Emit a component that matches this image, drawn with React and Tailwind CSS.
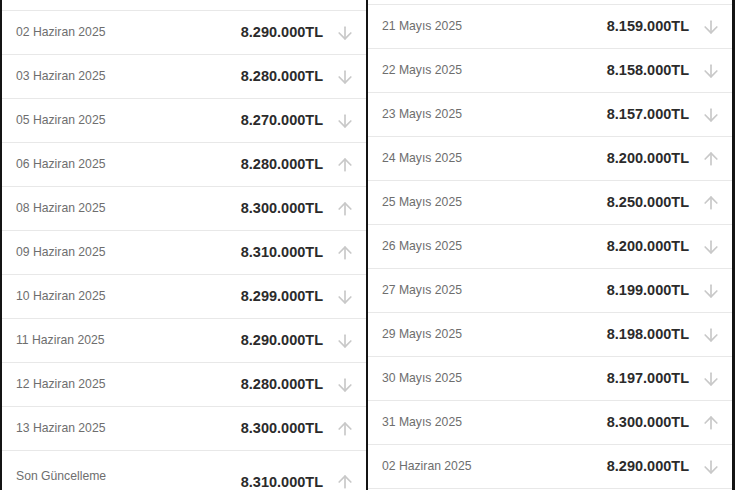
import { ArrowDown, ArrowUp } from 'lucide-react';

const leftRows = [
  { date: '02 Haziran 2025', price: '8.290.000TL', dir: 'down' },
  { date: '03 Haziran 2025', price: '8.280.000TL', dir: 'down' },
  { date: '05 Haziran 2025', price: '8.270.000TL', dir: 'down' },
  { date: '06 Haziran 2025', price: '8.280.000TL', dir: 'up' },
  { date: '08 Haziran 2025', price: '8.300.000TL', dir: 'up' },
  { date: '09 Haziran 2025', price: '8.310.000TL', dir: 'up' },
  { date: '10 Haziran 2025', price: '8.299.000TL', dir: 'down' },
  { date: '11 Haziran 2025', price: '8.290.000TL', dir: 'down' },
  { date: '12 Haziran 2025', price: '8.280.000TL', dir: 'down' },
  { date: '13 Haziran 2025', price: '8.300.000TL', dir: 'up' },
];

const rightRows = [
  { date: '21 Mayıs 2025', price: '8.159.000TL', dir: 'down' },
  { date: '22 Mayıs 2025', price: '8.158.000TL', dir: 'down' },
  { date: '23 Mayıs 2025', price: '8.157.000TL', dir: 'down' },
  { date: '24 Mayıs 2025', price: '8.200.000TL', dir: 'up' },
  { date: '25 Mayıs 2025', price: '8.250.000TL', dir: 'up' },
  { date: '26 Mayıs 2025', price: '8.200.000TL', dir: 'down' },
  { date: '27 Mayıs 2025', price: '8.199.000TL', dir: 'down' },
  { date: '29 Mayıs 2025', price: '8.198.000TL', dir: 'down' },
  { date: '30 Mayıs 2025', price: '8.197.000TL', dir: 'down' },
  { date: '31 Mayıs 2025', price: '8.300.000TL', dir: 'up' },
  { date: '02 Haziran 2025', price: '8.290.000TL', dir: 'down' },
];

const Arrow = ({ dir }) =>
  dir === 'up' ? (
    <ArrowUp size={20} strokeWidth={2} className="text-[#c8c8c8]" />
  ) : (
    <ArrowDown size={20} strokeWidth={2} className="text-[#c8c8c8]" />
  );

const PriceRow = ({ date, price, dir }) => (
  <div className="h-[44px] flex items-center border-b border-[#e8e8e8] pl-[14px] pr-[11px]">
    <span className="text-[12.2px] text-[#6e6e6e]">{date}</span>
    <span className="ml-auto text-[14.5px] font-bold text-[#2b2b2b]">{price}</span>
    <span className="ml-[12px] w-[20px] flex justify-center">
      <Arrow dir={dir} />
    </span>
  </div>
);

const App = () => {
  return (
    <div
      className="w-[735px] h-[490px] overflow-hidden bg-[#141414] flex"
      style={{ fontFamily: '"Liberation Sans", Arial, sans-serif' }}
    >
      {/* left screenshot */}
      <div className="ml-[2px] w-[364px] h-full bg-white overflow-hidden">
        <div className="h-[11px] border-b border-[#e8e8e8]"></div>
        {leftRows.map((r) => (
          <PriceRow key={r.date} {...r} />
        ))}
        <div className="h-[44px] flex items-start pl-[14px] pr-[11px]">
          <span className="mt-[17px] text-[12.2px] leading-4 text-[#6e6e6e]">Son Güncelleme</span>
          <span className="ml-auto mt-[21px] text-[14.5px] leading-5 font-bold text-[#2b2b2b]">
            8.310.000TL
          </span>
          <span className="ml-[12px] mt-[21px] w-[20px] flex justify-center">
            <Arrow dir="up" />
          </span>
        </div>
      </div>

      {/* right screenshot */}
      <div className="ml-[2px] w-[364px] h-full bg-white overflow-hidden">
        <div className="h-[5px] border-b border-[#e8e8e8]"></div>
        {rightRows.map((r) => (
          <PriceRow key={r.date} {...r} />
        ))}
      </div>
    </div>
  );
};

export default App;
